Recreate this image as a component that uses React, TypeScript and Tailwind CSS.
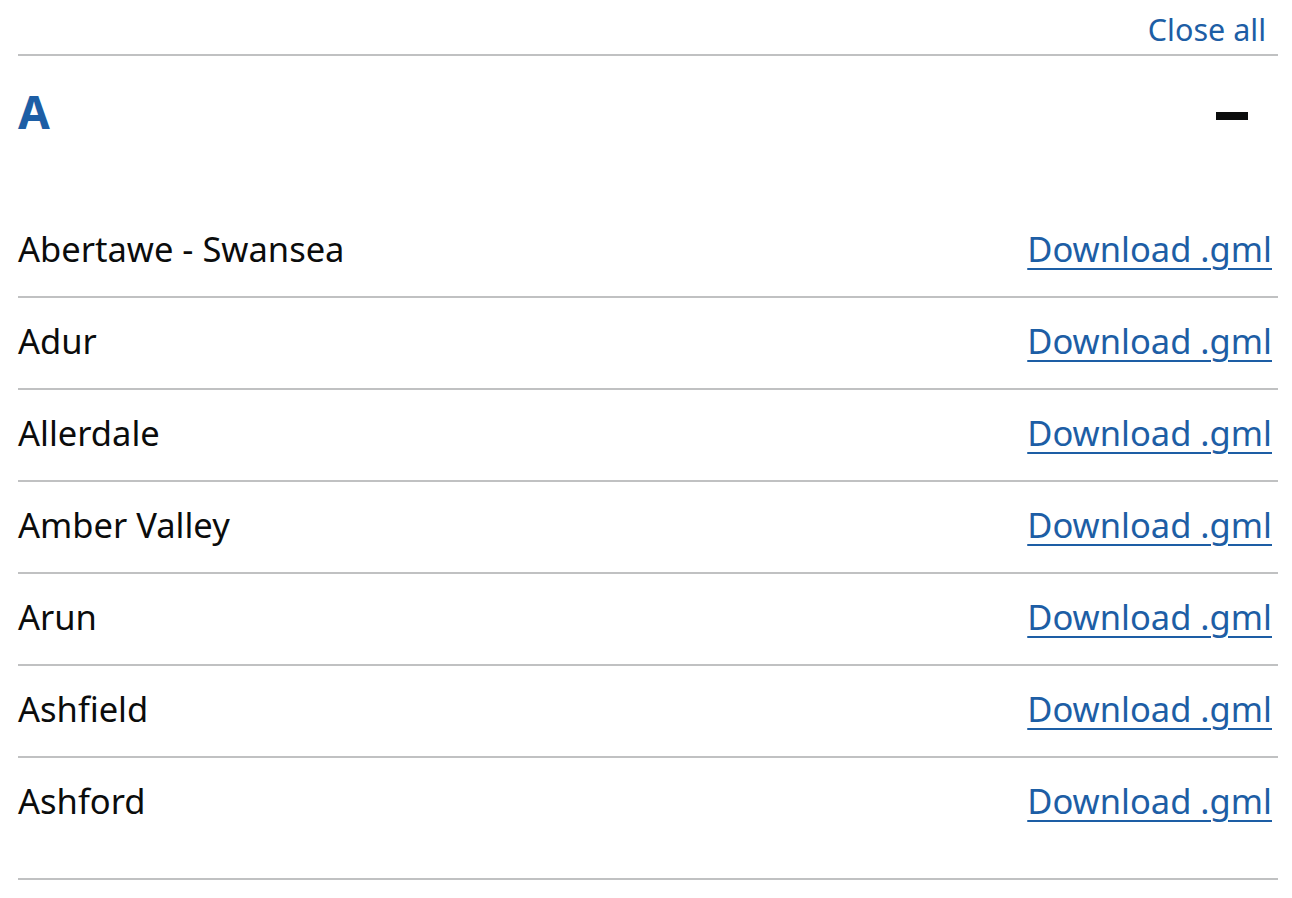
import React, { useState } from "react";

const councils = [
  "Abertawe - Swansea",
  "Adur",
  "Allerdale",
  "Amber Valley",
  "Arun",
  "Ashfield",
  "Ashford",
];

const App = () => {
  const [open, setOpen] = useState(true);

  return (
    <div
      className="min-h-[898px] bg-white pl-[18px] pr-[14px] text-[#0b0c0c]"
      style={{ fontFamily: '"Noto Sans", Arial, sans-serif' }}
    >
      <div className="flex h-[54px] items-center justify-end">
        <button
          onClick={() => setOpen(!open)}
          className="pt-[4px] pr-3 text-[30.5px] leading-none text-[#1d5ea5]"
        >
          {open ? "Close all" : "Open all"}
        </button>
      </div>

      <div className="border-y-2 border-[#c0c1c2]">
        <div className="flex items-start justify-between pt-[23px] pb-[33px] pr-[30px]">
          <h2 className="text-[46px] font-bold leading-[64px] text-[#1d5ea5]">
            A
          </h2>
          <span className="mt-[33px] block h-2 w-8 bg-[#0b0c0c]" />
        </div>

        {open && (
          <dl className="pt-[30px] pb-[30px]">
            {councils.map((name, idx) => (
              <div
                key={name}
                className={
                  idx < councils.length - 1
                    ? "flex items-center justify-between border-b-2 border-[#c0c1c2] pt-[18px] pb-[22px]"
                    : "flex items-center justify-between pt-[18px] pb-[22px]"
                }
              >
                <dt className="text-[34.5px] leading-[50px]">{name}</dt>
                <dd className="pr-[6px]">
                  <a
                    href="#"
                    className="text-[34.5px] leading-[50px] text-[#1d5ea5] underline decoration-2 underline-offset-[6px]"
                  >
                    Download .gml
                  </a>
                </dd>
              </div>
            ))}
          </dl>
        )}
      </div>
    </div>
  );
};

export default App;
